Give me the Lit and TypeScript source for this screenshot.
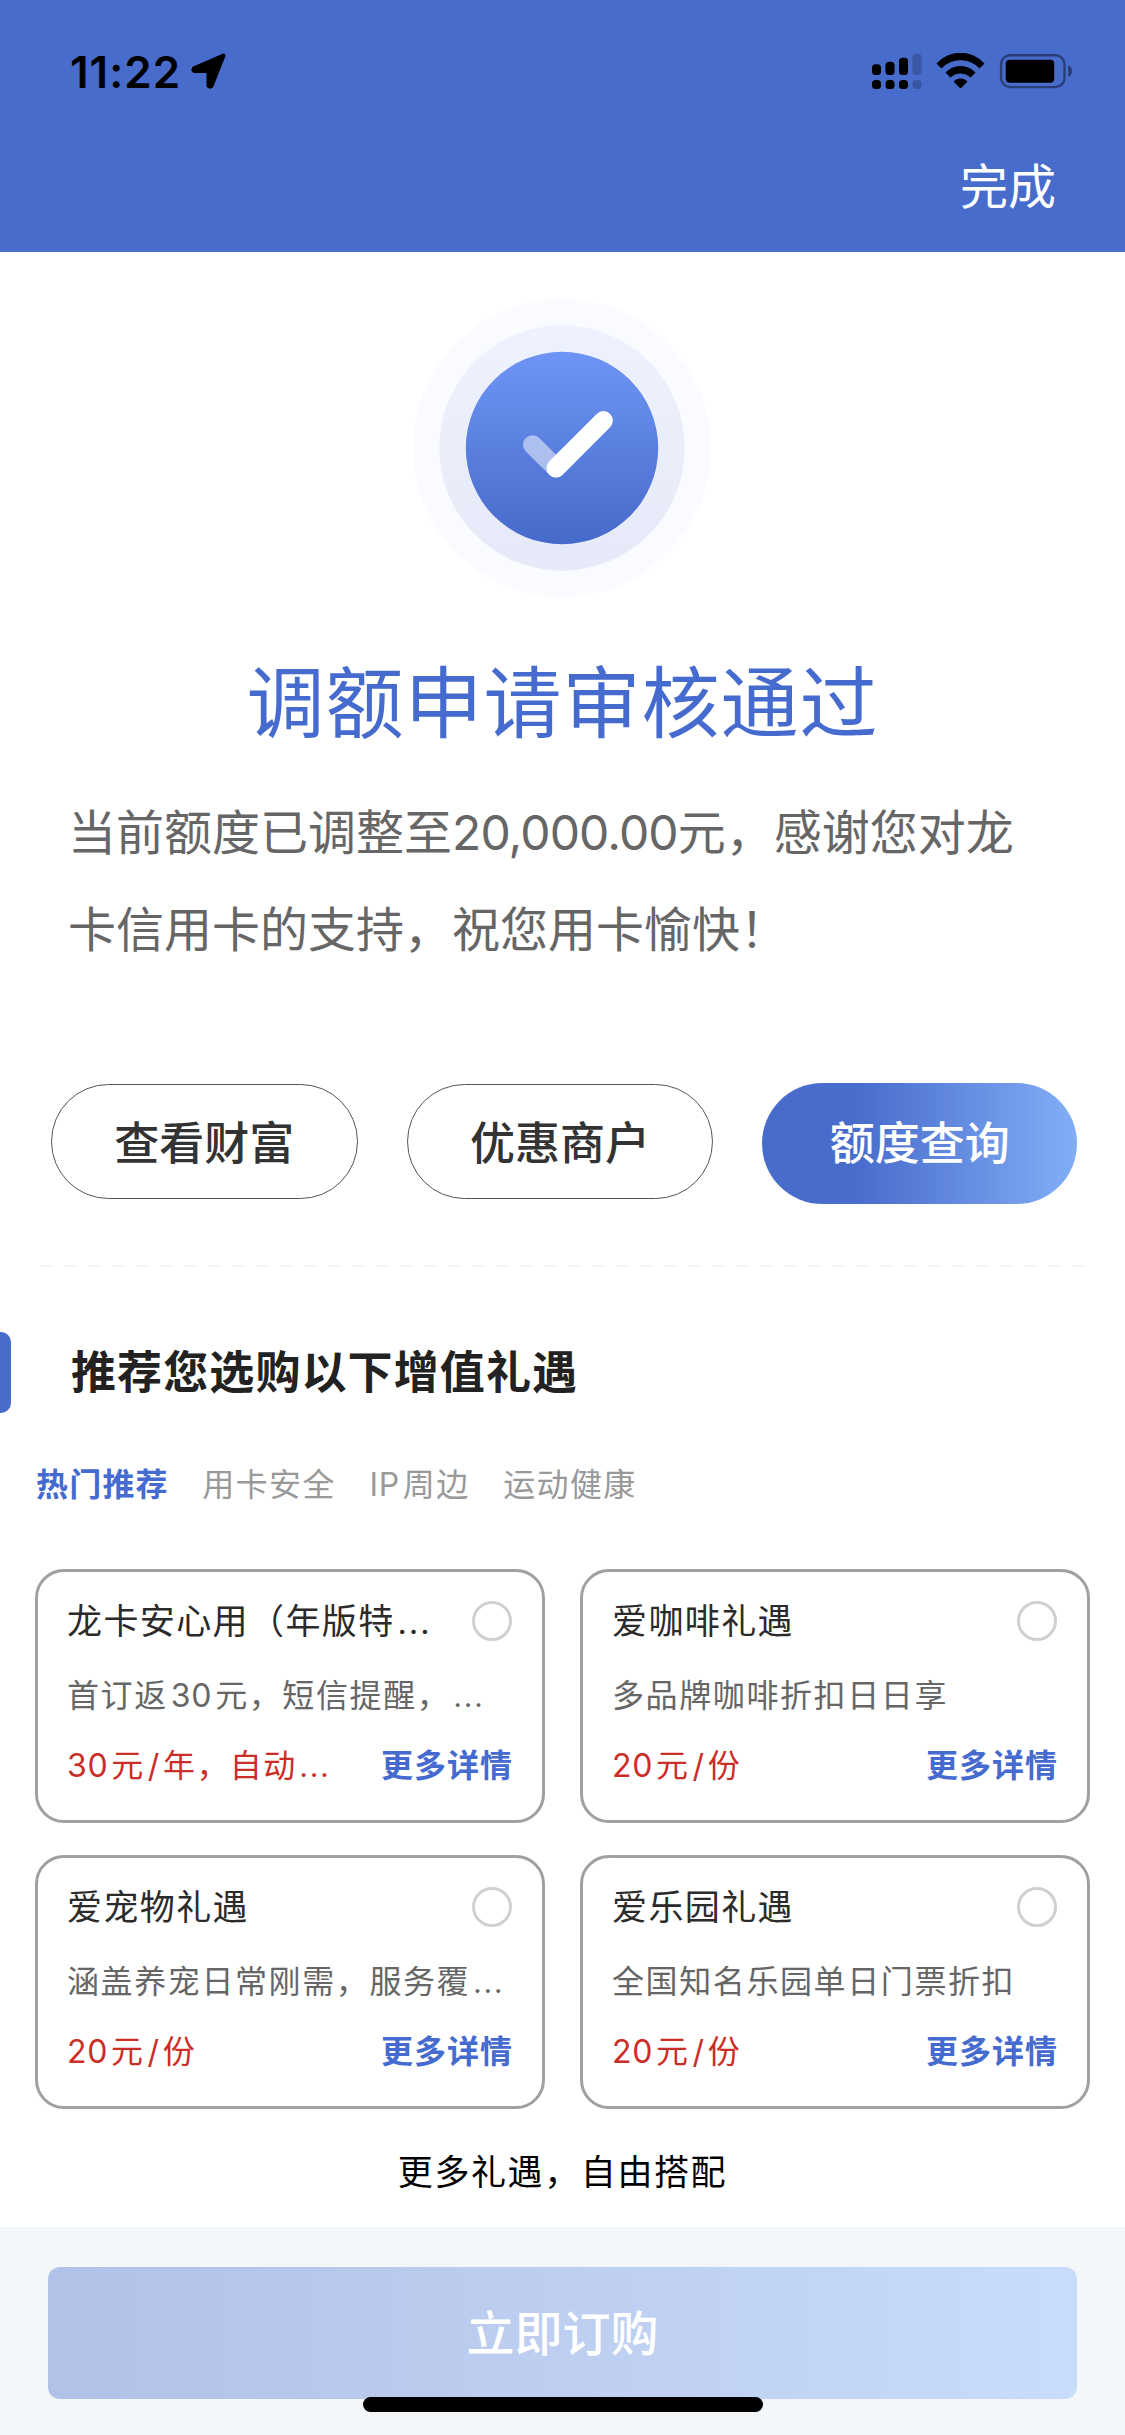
import { LitElement, html, css, svg } from "lit";
import { customElement, property, state } from "lit/decorators.js";

interface Gift {
  title: string;
  desc: string;
  price: string;
}

const GIFTS: Gift[] = [
  { title: "龙卡安心用（年版特…", desc: "首订返30元，短信提醒，…", price: "30元/年，自动…" },
  { title: "爱咖啡礼遇", desc: "多品牌咖啡折扣日日享", price: "20元/份" },
  { title: "爱宠物礼遇", desc: "涵盖养宠日常刚需，服务覆…", price: "20元/份" },
  { title: "爱乐园礼遇", desc: "全国知名乐园单日门票折扣", price: "20元/份" },
];

const TABS = ["热门推荐", "用卡安全", "IP周边", "运动健康"];

/* Adds a small gap where Latin letters or digits meet ideographs. */
const spaced = (text: string) =>
  text.split(/([0-9A-Za-z/]+|…)/).map((part, i) => {
    if (i % 2 === 0) return part;
    if (part === "…") return html`<span class="ellipsis">…</span>`;
    return html`<span class="latin ${text.startsWith(part) ? "lead" : ""}">${part}</span>`;
  });

const latinStyles = css`
  .latin {
    margin: 0 3px;
    letter-spacing: 0.7px;
  }
  .latin.lead {
    margin-left: 0;
  }
  .ellipsis {
    margin-left: 2px;
    font-size: 1.15em;
    font-weight: 300;
    line-height: 1;
  }
`;

@customElement("status-bar")
export class StatusBar extends LitElement {
  static styles = css`
    :host {
      display: flex;
      align-items: center;
      justify-content: space-between;
      height: 48px;
      padding: 48px 52px 0 70px;
      color: #000;
    }
    .left {
      display: flex;
      align-items: center;
      gap: 10px;
    }
    .time {
      font-size: 44px;
      font-weight: 600;
      line-height: 48px;
      letter-spacing: 1px;
    }
    .icons {
      display: block;
    }
    .arrow {
      margin-top: -2px;
    }
  `;

  render() {
    const bars = [
      [0, 11.3],
      [13.5, 8.7],
      [27, 4.7],
    ];
    return html`
      <div class="left">
        <span class="time">11:22</span>
        <svg class="icons arrow" width="36" height="36" viewBox="0 0 36 36">
          <path
            d="M32.5 2.5 L3 15.3 Q1.5 17.5 3.5 18 H17.5 V32.5 Q18.5 34.5 20.5 33 Z"
            fill="#000" stroke="#000" stroke-width="4" stroke-linejoin="round"
          />
        </svg>
      </div>
      <svg class="icons" width="202" height="38" viewBox="0 0 202 38">
        ${bars.map(([x, y]) => svg`<rect x=${x + 1} y=${y} width="9" height=${22 - y} rx="3.5"/>
          <rect x=${x + 1} y="27" width="9" height="9" rx="3.5"/>`)}
        <g opacity="0.2">
          <rect x="41.5" y="0.7" width="9" height="21.3" rx="3.5" />
          <rect x="41.5" y="27" width="9" height="9" rx="3.5" />
        </g>
        <path d="M66 10.5 A32 32 0 0 1 113 10.5 L108.6 15 A26 26 0 0 0 70.4 15 Z" stroke="#000" stroke-width="1" stroke-linejoin="round" />
        <path d="M75 19.5 A20.5 20.5 0 0 1 104 19.5 L99.6 24 A14.5 14.5 0 0 0 79.4 24 Z" stroke="#000" stroke-width="1" stroke-linejoin="round" />
        <path d="M83.5 28.5 A9 9 0 0 1 95.5 28.5 L89.5 34.5 Z" stroke="#000" stroke-width="1.5" stroke-linejoin="round" />
        <rect x="130.1" y="2.3" width="63.4" height="31.8" rx="9" fill="none" stroke="#000" stroke-opacity="0.42" stroke-width="2.4" />
        <rect x="134.7" y="6.7" width="48.5" height="23" rx="4" />
        <path d="M197.3 12.3 Q201 14.3 201 18.2 Q201 22 197.3 24 Z" fill-opacity="0.45" />
      </svg>
    `;
  }
}

@customElement("gift-card")
export class GiftCard extends LitElement {
  @property({ attribute: false }) gift!: Gift;

  static styles = [
    latinStyles,
    css`
      :host {
        display: block;
        box-sizing: border-box;
        height: 254px;
        padding: 24px 30px 0 29px;
        border: 3px solid #a0a0a0;
        border-radius: 29px;
        background: #fff;
      }
      .row {
        display: flex;
        align-items: center;
        justify-content: space-between;
        height: 50px;
        line-height: 50px;
        white-space: nowrap;
      }
      .title {
        font-size: 35px;
        letter-spacing: 1.4px;
        color: #2b2b2b;
      }
      .radio {
        box-sizing: border-box;
        width: 40px;
        height: 40px;
        margin-top: 0;
        border: 3px solid #d0d0d0;
        border-radius: 50%;
      }
      .desc {
        height: 50px;
        margin: 25px 0 20px;
        font-size: 32px;
        line-height: 50px;
        letter-spacing: 1.6px;
        white-space: nowrap;
        color: #666;
      }
      .price {
        font-size: 32px;
        letter-spacing: 1.4px;
        color: #cb2d27;
      }
      .more {
        font-size: 32px;
        font-weight: 600;
        letter-spacing: 1px;
        margin-right: -1px;
        color: #456ad0;
      }
    `,
  ];

  render() {
    return html`
      <div class="row">
        <span class="title">${spaced(this.gift.title)}</span>
        <span class="radio"></span>
      </div>
      <div class="desc">${spaced(this.gift.desc)}</div>
      <div class="row">
        <span class="price">${spaced(this.gift.price)}</span>
        <span class="more">更多详情</span>
      </div>
    `;
  }
}

@customElement("app-root")
export class AppRoot extends LitElement {
  @state() private activeTab = 0;

  static styles = [
    latinStyles,
    css`
      :host {
        display: block;
        width: 1125px;
        height: 2435px;
        overflow: hidden;
        background: #fff;
        font-family: Inter, "Noto Sans CJK SC", sans-serif;
        text-spacing-trim: space-all;
        text-autospace: no-autospace;
      }
      .page {
        display: flex;
        flex-direction: column;
        height: 100%;
      }
      .header {
        height: 252px;
        background: #486ccc;
      }
      .done {
        margin: 59px 69px 0 0;
        height: 64px;
        font-size: 48px;
        line-height: 64px;
        text-align: right;
        color: #fff;
      }
      .badge {
        display: block;
        margin: 46px 0 0 412px;
      }
      .headline {
        margin: 56px 0 0;
        font-size: 78px;
        font-weight: 400;
        letter-spacing: 1px;
        line-height: 100px;
        text-align: center;
        color: #466bcf;
      }
      .message {
        margin: 30px 60px 0 68px;
        font-size: 48px;
        line-height: 97px;
        white-space: nowrap;
        color: #666;
      }
      .amount {
        letter-spacing: -0.9px;
      }
      .actions {
        display: flex;
        align-items: flex-start;
        gap: 49px;
        margin: 105px 48px 0 51px;
      }
      .pill {
        box-sizing: border-box;
        width: 308px;
        height: 115px;
        margin-top: 1px;
        border: 1px solid #555;
        border-radius: 58px;
        font-size: 45px;
        font-weight: 500;
        line-height: 117px;
        text-align: center;
        color: #333;
      }
      .pill.primary {
        width: 316px;
        height: 121px;
        margin: 0 0 0 auto;
        border: none;
        border-radius: 61px;
        line-height: 122px;
        color: #fff;
        background: linear-gradient(90deg, #486ccc 30%, #82aef6);
      }
      .dashes {
        height: 2px;
        margin: 61px 40px 0;
        background: repeating-linear-gradient(90deg, #f4f4f4 0 12px, transparent 12px 24px);
      }
      .section {
        display: flex;
        align-items: center;
        height: 81px;
        margin-top: 65px;
      }
      .marker {
        width: 11px;
        height: 81px;
        border-radius: 0 10px 10px 0;
        background: #486ccc;
      }
      .section-title {
        margin: 0 0 0 60px;
        font-size: 45px;
        font-weight: 600;
        letter-spacing: 1.1px;
        line-height: 83px;
        color: #222;
      }
      .tabs {
        display: flex;
        gap: 33.5px;
        height: 50px;
        margin: 47px 0 0 36px;
        font-size: 32px;
        line-height: 50px;
        letter-spacing: 1.4px;
        color: #999;
      }
      .tab.active {
        font-weight: 600;
        letter-spacing: 1.2px;
        color: #456ad0;
      }
      .gifts {
        display: grid;
        grid-template-columns: 510px 510px;
        gap: 32px 35px;
        margin: 59px 35px 0;
      }
      .note {
        margin-top: 38px;
        font-size: 35px;
        line-height: 50px;
        letter-spacing: 1.6px;
        text-align: center;
        color: #000;
      }
      .footer {
        box-sizing: border-box;
        position: relative;
        height: 208px;
        margin-top: auto;
        padding: 40px 48px 0;
        background: #f3f7fa;
      }
      .submit {
        height: 132px;
        border-radius: 12px;
        background: linear-gradient(90deg, #b2c1e7, #c9dcfa);
        font-size: 48px;
        font-weight: 500;
        line-height: 133px;
        text-align: center;
        color: #fff;
      }
      .home-indicator {
        position: absolute;
        left: 363px;
        bottom: 23px;
        width: 400px;
        height: 15px;
        border-radius: 8px;
        background: #000;
      }
    `,
  ];

  render() {
    return html`
      <div class="page">
        <div class="header">
          <status-bar></status-bar>
          <div class="done">完成</div>
        </div>
        <svg class="badge" width="300" height="300" viewBox="-150 -150 300 300">
          <defs>
            <linearGradient id="disc" x1="0" y1="0" x2="0" y2="1">
              <stop offset="0" stop-color="#6e95f5" />
              <stop offset="1" stop-color="#466aca" />
            </linearGradient>
            <linearGradient id="ring" x1="0" y1="0" x2="0" y2="1">
              <stop offset="0" stop-color="#eef2fe" />
              <stop offset="1" stop-color="#e6eaf8" />
            </linearGradient>
          </defs>
          <circle r="149" fill="#fafbff" />
          <circle r="122.7" fill="url(#ring)" />
          <circle r="96.2" fill="url(#disc)" />
          <path d="M-29.5 -3.3 L-6 20" stroke="#fff" stroke-opacity="0.5" stroke-width="19" stroke-linecap="round" />
          <path d="M-6 20 L41.4 -27.4" stroke="#fff" stroke-width="19" stroke-linecap="round" />
        </svg>
        <h1 class="headline">调额申请审核通过</h1>
        <div class="message">
          <div>当前额度已调整至<span class="amount">20,000.00</span>元，感谢您对龙</div>
          <div>卡信用卡的支持，祝您用卡愉快！</div>
        </div>
        <div class="actions">
          <div class="pill">查看财富</div>
          <div class="pill">优惠商户</div>
          <div class="pill primary">额度查询</div>
        </div>
        <div class="dashes"></div>
        <div class="section">
          <span class="marker"></span>
          <h2 class="section-title">推荐您选购以下增值礼遇</h2>
        </div>
        <div class="tabs">
          ${TABS.map(
            (tab, i) => html`<span
              class="tab ${i === this.activeTab ? "active" : ""}"
              @click=${() => (this.activeTab = i)}
            >${spaced(tab)}</span>`
          )}
        </div>
        <div class="gifts">
          ${GIFTS.map((gift) => html`<gift-card .gift=${gift}></gift-card>`)}
        </div>
        <div class="note">更多礼遇，自由搭配</div>
        <div class="footer">
          <div class="submit">立即订购</div>
          <div class="home-indicator"></div>
        </div>
      </div>
    `;
  }
}
